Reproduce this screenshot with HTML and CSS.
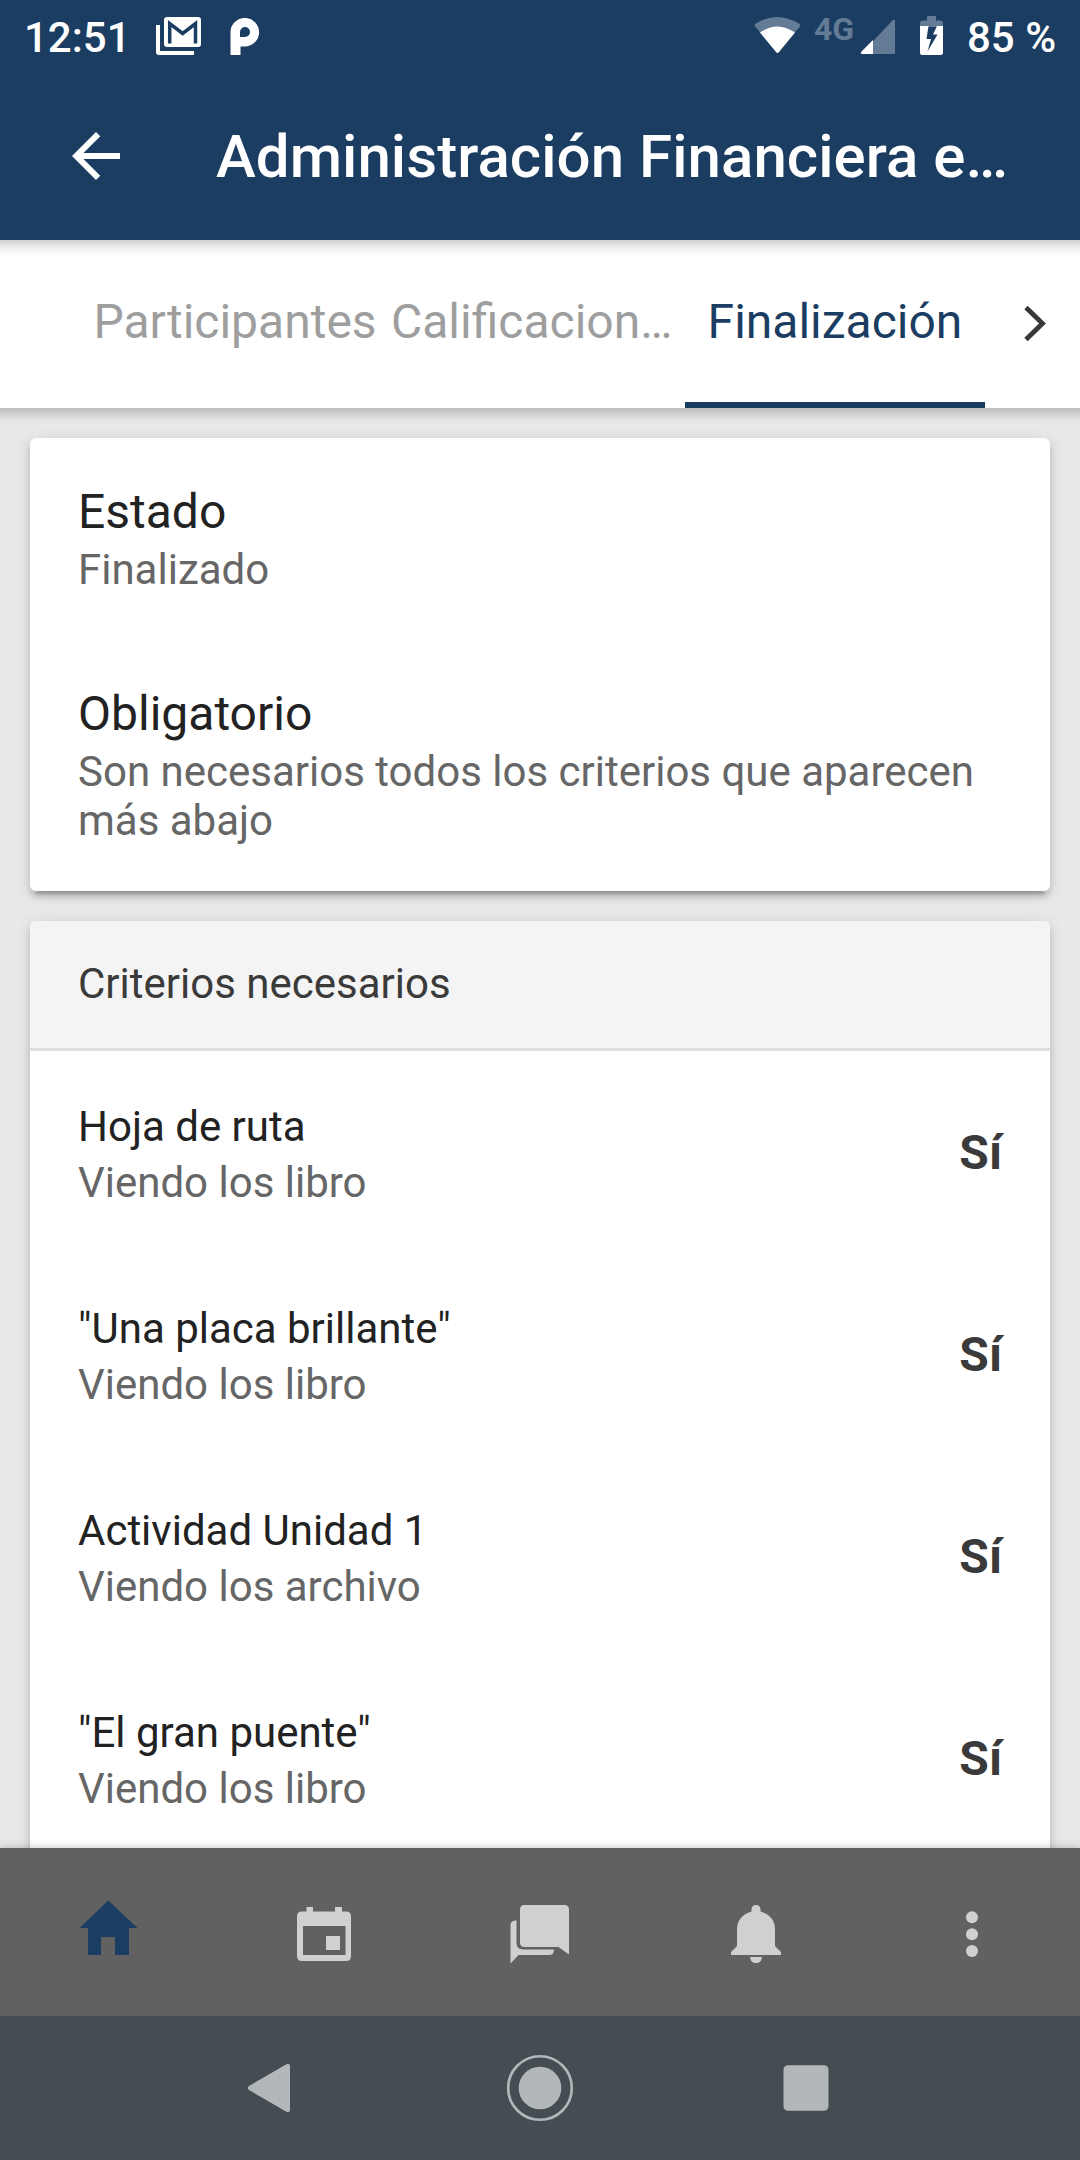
FILE: index.html
```html
<!DOCTYPE html>
<html lang="es">
<head>
<meta charset="utf-8">
<title>Administración Financiera</title>
<link rel="stylesheet" href="styles.css">
</head>
<body>
<div class="screen">
  <div class="status-bar">
    <span class="clock">12:51</span>
    <svg class="icon-mail" viewBox="156 17 46 38" width="46" height="38"><rect x="164" y="17" width="37" height="30" rx="3" fill="#fff"/><path fill="none" stroke="#1c3d62" stroke-width="3.500" d="M169.700 43.500V23.500L182.700 33.500 195.500 23.500V43.500"/><path fill="#fff" d="M156 25h4v26h34v4h-35q-3 0-3-3z"/></svg>
    <svg class="icon-p" viewBox="230 18 30 37" width="30" height="37"><path fill="#fff" fill-rule="evenodd" d="M230.500 55V32a14.300 14.300 0 1 1 14.300 14.500H240.500V55zM240 37h5a5 5 0 1 0-5-5z"/></svg>
    <div class="status-right">
      <svg class="icon-wifi" viewBox="754 17 46 37" width="46" height="37"><path fill="#637b95" d="M755.500 27Q753.500 25 756 23.500 777 10.500 799 23.500 801 25 799.500 27L777.500 53z"/><path fill="#fff" d="M760 32.500Q777 20.500 795 32.500L779 52q-1.500 2-3 0z"/></svg>
      <span class="network">4G</span>
      <svg class="icon-signal" viewBox="861 20 34 34" width="34" height="34"><path fill="#637b95" d="M895 22v32h-34L892.500 20.500q2.500-2 2.500 1.500z"/><path fill="#fff" d="M873 40v14h-11q-2-.5-.5-2.500z"/></svg>
      <svg class="icon-battery" viewBox="920 16 23 39" width="23" height="39"><path fill="#637b95" d="M927 16h9v4.500h4q3 0 3 3V27h-23v-3.500q0-3 3-3h4z"/><path fill="#fff" fill-rule="evenodd" d="M920 26h23v27q0 2-2 2h-19q-2 0-2-2zM928.500 26L926.500 39h4.500L927.500 51.500 937.500 34.500h-4.500l4-8.500z"/></svg>
      <span class="battery">85 %</span>
    </div>
  </div>
  <header class="app-bar">
    <svg class="icon-back" viewBox="0 0 24 24" width="72" height="72"><path fill="#fff" d="M20 11H7.830l5.590-5.590L12 4l-8 8 8 8 1.410-1.410L7.830 13H20z"/></svg>
    <h1 class="title">Administración Financiera e…</h1>
  </header>
  <nav class="tabs">
    <a class="tab">Participantes</a>
    <a class="tab tab-left">Calificacion…</a>
    <a class="tab tab-active">Finalización</a>
    <svg class="icon-next" viewBox="1024 305 22 37" width="22" height="37"><path fill="none" stroke="#383838" stroke-width="4.800" d="M1026 307.500L1042.500 323.500 1026 339.500"/></svg>
  </nav>
  <main class="content">
    <section class="card">
      <div class="item">
        <h2 class="name name-large">Estado</h2>
        <p class="detail">Finalizado</p>
      </div>
      <div class="item">
        <h2 class="name name-large">Obligatorio</h2>
        <p class="detail">Son necesarios todos los criterios que aparecen más abajo</p>
      </div>
    </section>
    <section class="card">
      <div class="card-header">Criterios necesarios</div>
      <div class="row">
        <div class="row-text"><h2 class="name">Hoja de ruta</h2><p class="detail">Viendo los libro</p></div>
        <strong class="value">Sí</strong>
      </div>
      <div class="row">
        <div class="row-text"><h2 class="name">"Una placa brillante"</h2><p class="detail">Viendo los libro</p></div>
        <strong class="value">Sí</strong>
      </div>
      <div class="row">
        <div class="row-text"><h2 class="name">Actividad Unidad 1</h2><p class="detail">Viendo los archivo</p></div>
        <strong class="value">Sí</strong>
      </div>
      <div class="row">
        <div class="row-text"><h2 class="name">"El gran puente"</h2><p class="detail">Viendo los libro</p></div>
        <strong class="value">Sí</strong>
      </div>
    </section>
  </main>
  <nav class="bottom-bar">
    <svg viewBox="72 1896 72 72"><path fill="#1c3d62" d="M108.300 1900.500L137.500 1928H129v27h-14v-18h-14v18H88v-27h-8.500z"/></svg>
    <svg viewBox="288 1896 72 72"><path fill-rule="evenodd" d="M306.500 1907h6.500v4.500h22V1907h7v4.500h4q5 0 5 5V1956q0 5-5 5h-44q-5 0-5-5v-39.500q0-5 5-5h4.500zM303 1926v29h42.500v-29zM326 1936h14v14h-14z"/></svg>
    <svg viewBox="504 1896 72 72"><path d="M524.500 1905h40q4.500 0 4.500 4.500v45L558.500 1947h-34q-4.500 0-4.500-4.500v-33q0-4.500 4.500-4.500z"/><path d="M516.500 1920.500v22q0 7 7 7h30.500q0 5.500-5 5.500h-30.500l-8 8.500V1925q0-4.500 6-4.500z"/></svg>
    <svg viewBox="720 1896 72 72"><path d="M751.500 1911.500V1909q.5-4 4.500-4t4.500 4v2.500q14.500 4.500 14.500 18V1946l6 6v3h-50v-3l6-6v-16.500q0-13.500 14.500-18zM750 1957h12q-.5 6-6 6t-6-6z"/></svg>
    <svg viewBox="936 1896 72 72"><circle cx="972" cy="1917.300" r="6"/><circle cx="972" cy="1934.300" r="6"/><circle cx="972" cy="1951" r="6"/></svg>
  </nav>
  <div class="system-bar">
    <svg viewBox="233 2052 72 72"><path d="M249 2086L286 2064.500q4-2 4 2v43q0 4-4 2L249 2090q-2.500-2 0-4z"/></svg>
    <svg viewBox="504 2052 72 72"><circle cx="540" cy="2088" r="31.800" fill="none" stroke="#b2b7b9" stroke-width="2.600"/><circle cx="540" cy="2088" r="21.300"/></svg>
    <svg viewBox="770 2052 72 72"><rect x="783.500" y="2065.300" width="45" height="45.500" rx="4.500"/></svg>
  </div>
</div>
</body>
</html>
```
FILE: styles.css
```css
* { box-sizing: border-box; }
body {
  margin: 0;
  font-family: Roboto, sans-serif;
  background: #e8e8e8;
}
svg { display: block; flex: none; }
h1, h2, p { margin: 0; font-weight: 400; }

.screen {
  display: flex;
  flex-direction: column;
  width: 1080px;
  height: 2160px;
  overflow: hidden;
}

.status-bar {
  display: flex;
  align-items: flex-start;
  flex: none;
  height: 72px;
  padding: 0 26px 0 24px;
  background: #1c3d62;
  color: #fff;
  font-size: 42px;
  font-weight: 500;
  line-height: 49px;
}
.clock { width: 132px; padding-top: 13px; white-space: nowrap; }
.icon-mail { margin-top: 17px; }
.icon-p { margin: 18px 0 0 28px; }
.status-right { display: flex; margin-left: auto; }
.icon-wifi { margin-top: 17px; }
.network {
  width: 47px;
  margin-left: 14px;
  padding-top: 11px;
  color: #637b95;
  font-size: 32px;
  font-weight: 700;
  line-height: 36px;
}
.icon-signal { margin-top: 20px; }
.icon-battery { margin: 16px 0 0 25px; }
.battery { width: 87px; margin-left: 24px; padding-top: 13px; white-space: nowrap; }

.app-bar {
  display: flex;
  align-items: center;
  flex: none;
  height: 168px;
  padding-left: 60px;
  background: #1c3d62;
  color: #fff;
}
.title {
  margin-left: 84px;
  padding-top: 2px;
  font-size: 60px;
  font-weight: 500;
  letter-spacing: .06px;
  line-height: 70px;
  white-space: nowrap;
}

.tabs {
  display: flex;
  align-items: stretch;
  flex: none;
  height: 168px;
  padding-left: 85px;
  background: linear-gradient(#d0d0d0, #e4e4e4 5px, #f7f7f7 11px, #fff 16px);
  font-size: 48px;
  line-height: 56px;
  color: #9e9e9e;
}
.tab {
  width: 300px;
  padding: 54px 8px 0;
  text-align: center;
  white-space: nowrap;
}
.tab-left { padding: 54px 6px 0; text-align: left; }
.tab-active { color: #1c3d62; border-bottom: 6px solid #1c3d62; }
.icon-next { margin: 65px 0 0 39px; }

.content {
  display: flex;
  flex-direction: column;
  gap: 30px;
  flex: 1;
  min-height: 0;
  padding: 30px;
  overflow: hidden;
  background: linear-gradient(#bebebe, #d2d2d2 6px, #e3e3e3 12px, #e8e8e8 17px);
}
.card {
  flex: none;
  border-radius: 6px;
  background: #fff;
  box-shadow: 0 6px 6px rgba(0,0,0,.14), 0 9px 3px -6px rgba(0,0,0,.2), 0 3px 15px rgba(0,0,0,.12);
}
.item { padding: 46px 48px; }
.name { color: #222; font-size: 42px; line-height: 49px; margin-bottom: 7px; }
.name-large { font-size: 48px; line-height: 56px; margin-bottom: 5px; }
.detail { color: #666; font-size: 42px; line-height: 49px; }

.card-header {
  height: 130px;
  padding: 38px 48px 0;
  border-bottom: 3px solid #dedede;
  border-radius: 6px 6px 0 0;
  background: #f4f4f4;
  color: #3a3a3a;
  font-size: 42px;
  line-height: 49px;
}
.row {
  display: flex;
  align-items: center;
  justify-content: space-between;
  height: 202px;
  padding: 0 48px;
}
.row-text { padding-top: 5px; }
.value { padding-top: 2px; color: #3a3a3a; font-size: 48px; line-height: 56px; font-weight: 700; }

.bottom-bar {
  display: grid;
  grid-template-columns: repeat(5, 1fr);
  place-items: center;
  flex: none;
  height: 168px;
  background: #616161;
  fill: #d0d0d0;
  box-shadow: 0 0 8px rgba(0,0,0,.25);
}
.bottom-bar svg, .system-bar svg { width: 72px; height: 72px; }

.system-bar {
  display: grid;
  grid-template-columns: 233px 72px 199px 72px 194px 72px;
  align-items: center;
  flex: none;
  height: 144px;
  background: #454c52;
  fill: #b2b7b9;
  z-index: 1;
}
.system-bar svg:nth-child(1) { grid-column: 2; }
.system-bar svg:nth-child(2) { grid-column: 4; }
.system-bar svg:nth-child(3) { grid-column: 6; }
```
